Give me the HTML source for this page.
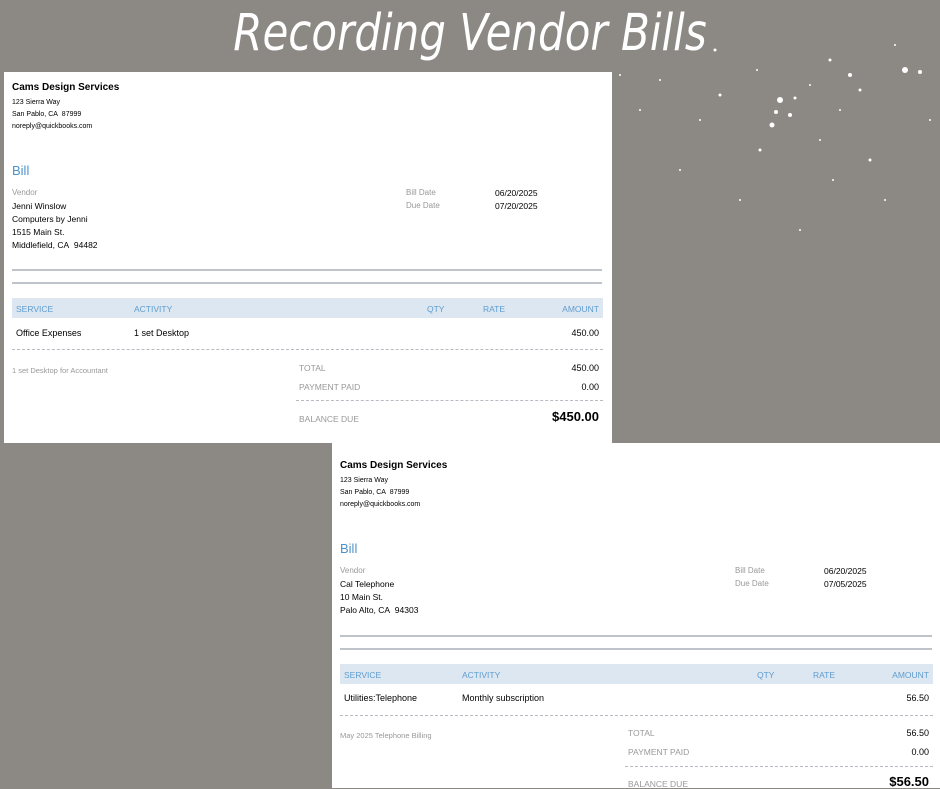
<!DOCTYPE html>
<html><head><meta charset="utf-8"><style>
*{margin:0;padding:0;box-sizing:border-box}
body{width:940px;height:788px;overflow:hidden;background:#8c8883;font-family:"Liberation Sans",Arial,sans-serif;position:relative}
.title{position:absolute;left:0;width:940px;top:8px;text-align:center;color:#fff;font-family:"DejaVu Sans",sans-serif;font-style:italic;font-weight:300;font-size:42px;letter-spacing:0px;transform:scaleY(1.2)}
.card{position:absolute;width:608px}
.box{position:absolute;left:0;width:608px;background:#fff}
.t{position:absolute;white-space:nowrap;line-height:1;margin-top:1px}
.r{text-align:right}
.hl{position:absolute;left:8px;width:590px;height:1.5px;background:#bfc3ca}
.dash{position:absolute;height:0;border-top:1px dashed #b8bcc2}
.hdr{position:absolute;left:8px;top:226px;width:591px;height:20px;background:#dce7f1}
.h{color:#5f9dcf;font-size:8.5px}
.g{color:#999}
</style></head><body>
<div class="title">Recording Vendor Bills</div>
<svg width="940" height="788" style="position:absolute;left:0;top:0" fill="#fff">
<circle cx="780" cy="100" r="3"/><circle cx="790" cy="115" r="2"/><circle cx="772" cy="125" r="2.5"/><circle cx="905" cy="70" r="3"/><circle cx="920" cy="72" r="2"/><circle cx="830" cy="60" r="1.5"/><circle cx="850" cy="75" r="2"/><circle cx="720" cy="95" r="1.5"/><circle cx="700" cy="120" r="1"/><circle cx="760" cy="150" r="1.5"/><circle cx="820" cy="140" r="1"/><circle cx="870" cy="160" r="1.5"/><circle cx="660" cy="80" r="1"/><circle cx="640" cy="110" r="1"/><circle cx="680" cy="170" r="1"/><circle cx="740" cy="200" r="1"/><circle cx="800" cy="230" r="1"/><circle cx="860" cy="90" r="1.5"/><circle cx="930" cy="120" r="1"/><circle cx="885" cy="200" r="1"/><circle cx="776" cy="112" r="2"/><circle cx="795" cy="98" r="1.5"/><circle cx="810" cy="85" r="1"/><circle cx="840" cy="110" r="1"/><circle cx="715" cy="50" r="1.5"/><circle cx="895" cy="45" r="1"/><circle cx="757" cy="70" r="1"/><circle cx="833" cy="180" r="1"/><circle cx="620" cy="75" r="1"/>
</svg>

<div class="card" style="left:4px;top:72px">
<div class="box" style="top:0;height:371px"></div>
<div class="t" style="left:8px;top:10px;font-size:10px;font-weight:bold">Cams Design Services</div>
<div class="t" style="left:8px;top:26px;font-size:7px">123 Sierra Way</div>
<div class="t" style="left:8px;top:38px;font-size:7px">San Pablo, CA&nbsp; 87999</div>
<div class="t" style="left:8px;top:50px;font-size:7px">noreply@quickbooks.com</div>
<div class="t" style="left:8px;top:91px;font-size:13px;color:#4d92c9">Bill</div>
<div class="t g" style="left:8px;top:116px;font-size:8px">Vendor</div>
<div class="t" style="left:8px;top:129px;font-size:8.5px">Jenni Winslow</div>
<div class="t" style="left:8px;top:142px;font-size:8.5px">Computers by Jenni</div>
<div class="t" style="left:8px;top:155px;font-size:8.5px">1515 Main St.</div>
<div class="t" style="left:8px;top:168px;font-size:8.5px">Middlefield, CA&nbsp; 94482</div>
<div class="t g" style="left:402px;top:116px;font-size:8px">Bill Date</div>
<div class="t" style="left:491px;top:116px;font-size:8.5px">06/20/2025</div>
<div class="t g" style="left:402px;top:129px;font-size:8px">Due Date</div>
<div class="t" style="left:491px;top:129px;font-size:8.5px">07/20/2025</div>
<div class="hl" style="top:197px"></div><div class="hl" style="top:210px"></div>
<div class="hdr"></div>
<div class="t h" style="left:12px;top:232px">SERVICE</div>
<div class="t h" style="left:130px;top:232px">ACTIVITY</div>
<div class="t h" style="left:423px;top:232px">QTY</div>
<div class="t h" style="left:479px;top:232px">RATE</div>
<div class="t h r" style="right:13px;top:232px">AMOUNT</div>
<div class="t" style="left:12px;top:256px;font-size:9px">Office Expenses</div>
<div class="t" style="left:130px;top:256px;font-size:9px">1 set Desktop</div>
<div class="t r" style="right:13px;top:256px;font-size:9px">450.00</div>
<div class="dash" style="left:8px;width:591px;top:277px"></div>
<div class="t g" style="left:8px;top:294px;font-size:7.5px">1 set Desktop for Accountant</div>
<div class="t g" style="left:295px;top:291px;font-size:8.5px">TOTAL</div>
<div class="t r" style="right:13px;top:291px;font-size:9px">450.00</div>
<div class="t g" style="left:295px;top:310px;font-size:8.5px">PAYMENT PAID</div>
<div class="t r" style="right:13px;top:310px;font-size:9px">0.00</div>
<div class="dash" style="left:292px;width:307px;top:328px"></div>
<div class="t g" style="left:295px;top:342px;font-size:8.5px">BALANCE DUE</div>
<div class="t r" style="right:13px;top:337px;font-size:13px;font-weight:bold">$450.00</div>
</div>

<div class="card" style="left:332px;top:450px">
<div class="box" style="top:-7px;height:345px"></div>
<div class="t" style="left:8px;top:10px;font-size:10px;font-weight:bold">Cams Design Services</div>
<div class="t" style="left:8px;top:26px;font-size:7px">123 Sierra Way</div>
<div class="t" style="left:8px;top:38px;font-size:7px">San Pablo, CA&nbsp; 87999</div>
<div class="t" style="left:8px;top:50px;font-size:7px">noreply@quickbooks.com</div>
<div class="t" style="left:8px;top:91px;font-size:13px;color:#4d92c9">Bill</div>
<div class="t g" style="left:8px;top:116px;font-size:8px">Vendor</div>
<div class="t" style="left:8px;top:129px;font-size:8.5px">Cal Telephone</div>
<div class="t" style="left:8px;top:142px;font-size:8.5px">10 Main St.</div>
<div class="t" style="left:8px;top:155px;font-size:8.5px">Palo Alto, CA&nbsp; 94303</div>
<div class="t g" style="left:403px;top:116px;font-size:8px">Bill Date</div>
<div class="t" style="left:492px;top:116px;font-size:8.5px">06/20/2025</div>
<div class="t g" style="left:403px;top:129px;font-size:8px">Due Date</div>
<div class="t" style="left:492px;top:129px;font-size:8.5px">07/05/2025</div>
<div class="hl" style="top:185px;width:592px"></div><div class="hl" style="top:198px;width:592px"></div>
<div class="hdr" style="top:214px;width:593px"></div>
<div class="t h" style="left:12px;top:220px">SERVICE</div>
<div class="t h" style="left:130px;top:220px">ACTIVITY</div>
<div class="t h" style="left:425px;top:220px">QTY</div>
<div class="t h" style="left:481px;top:220px">RATE</div>
<div class="t h r" style="right:11px;top:220px">AMOUNT</div>
<div class="t" style="left:12px;top:243px;font-size:9px">Utilities:Telephone</div>
<div class="t" style="left:130px;top:243px;font-size:9px">Monthly subscription</div>
<div class="t r" style="right:11px;top:243px;font-size:9px">56.50</div>
<div class="dash" style="left:8px;width:593px;top:265px"></div>
<div class="t g" style="left:8px;top:281px;font-size:7.5px">May 2025 Telephone Billing</div>
<div class="t g" style="left:296px;top:278px;font-size:8.5px">TOTAL</div>
<div class="t r" style="right:11px;top:278px;font-size:9px">56.50</div>
<div class="t g" style="left:296px;top:297px;font-size:8.5px">PAYMENT PAID</div>
<div class="t r" style="right:11px;top:297px;font-size:9px">0.00</div>
<div class="dash" style="left:293px;width:308px;top:316px"></div>
<div class="t g" style="left:296px;top:329px;font-size:8.5px">BALANCE DUE</div>
<div class="t r" style="right:11px;top:324px;font-size:13px;font-weight:bold">$56.50</div>
</div>
</body></html>
